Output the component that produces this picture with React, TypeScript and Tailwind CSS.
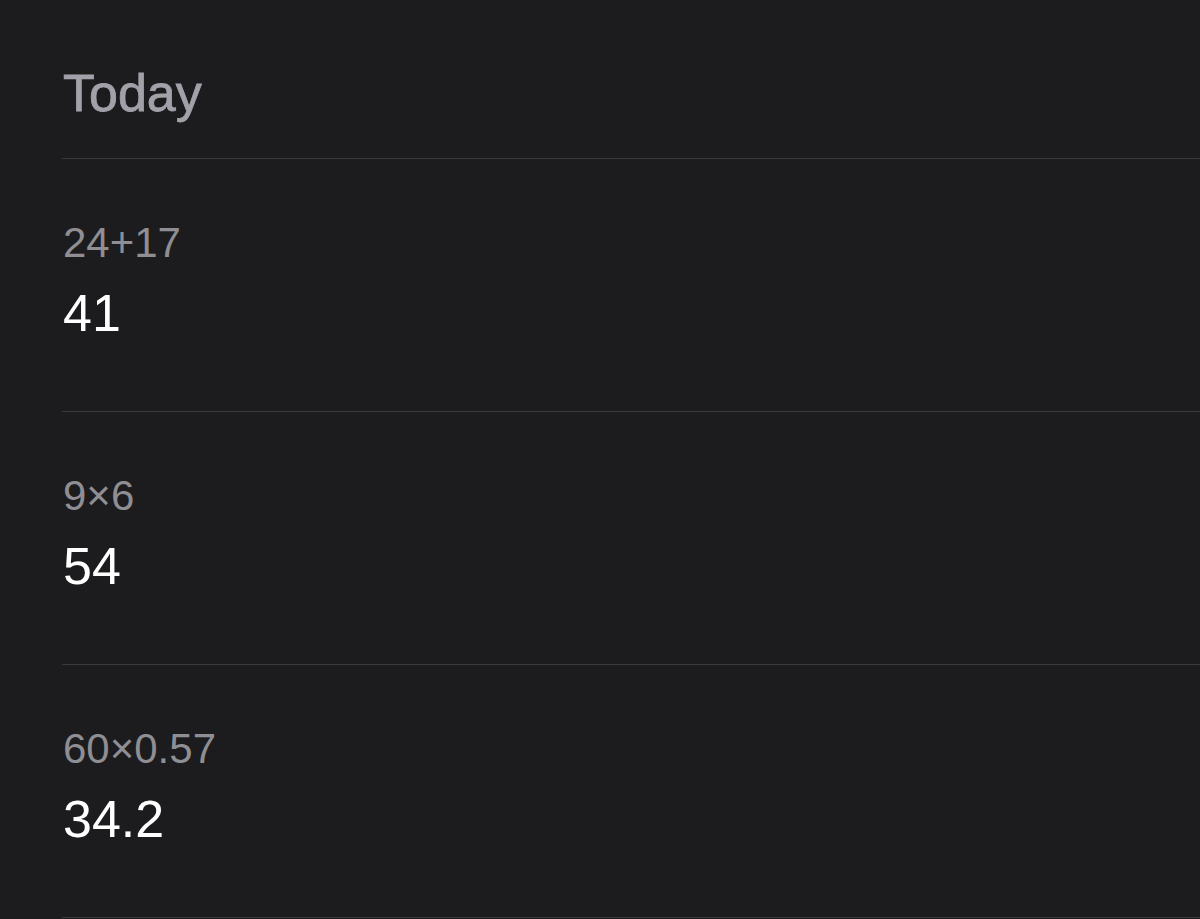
import React from "react";

const rows = [
  { expr: "24+17", result: "41" },
  { expr: "9×6", result: "54" },
  { expr: "60×0.57", result: "34.2" },
];

export default function App() {
  return (
    <div
      className="w-[1200px] h-[919px] bg-[#1c1c1e] overflow-hidden pl-[62px]"
      style={{ fontFamily: '"Liberation Sans", Arial, sans-serif' }}
    >
      <div className="h-[159px] border-b border-[#3a3a3c] pt-[67px] pl-px">
        <div className="text-[52px] leading-none text-[#a2a1a9] [-webkit-text-stroke:0.8px_#a2a1a9]">
          Today
        </div>
      </div>
      {rows.map((r) => (
        <div key={r.expr} className="h-[253px] border-b border-[#3a3a3c] pt-[63px] pl-px">
          <div className="text-[42px] leading-none text-[#8e8e93]">{r.expr}</div>
          <div className="mt-[23px] text-[52px] leading-none text-white">{r.result}</div>
        </div>
      ))}
    </div>
  );
}
